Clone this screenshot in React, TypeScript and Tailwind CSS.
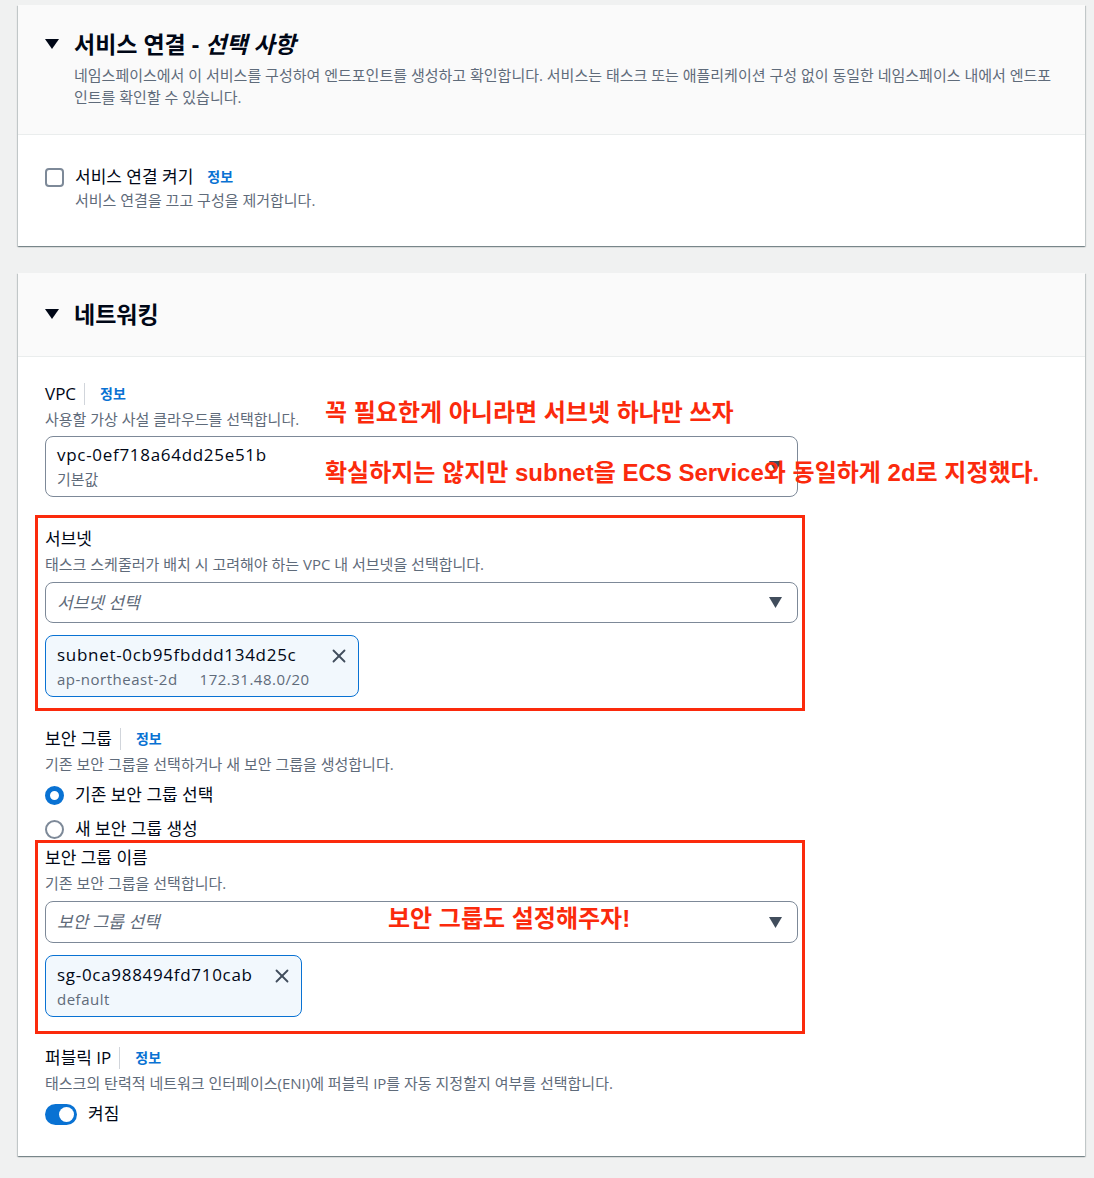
import { X } from "lucide-react";

const font = "font-['Open_Sans','Noto_Sans_CJK_KR',sans-serif]";
const note =
  "absolute z-10 whitespace-nowrap font-['Liberation_Sans','Noto_Sans_CJK_KR',sans-serif] font-bold text-[24px] leading-[30px] text-[#fb2a0c]";

function Caret({ className = "" }: { className?: string }) {
  return (
    <svg width="14" height="10" viewBox="0 0 14 10" className={className}>
      <polygon points="0,0 14,0 7,10" fill="currentColor" />
    </svg>
  );
}

function SelectCaret() {
  return (
    <svg width="13" height="11" viewBox="0 0 13 11" className="text-[#414d5c]">
      <polygon points="0,0 13,0 6.5,11" fill="currentColor" />
    </svg>
  );
}

function Info({ sep = true }: { sep?: boolean }) {
  return (
    <span
      className={`text-[14px] font-bold text-[#0972d3] ${
        sep ? "ml-[8px] border-l border-[#d1d5db] pl-[15px]" : "ml-[14px]"
      }`}
    >
      정보
    </span>
  );
}

function Label({ text, info = false }: { text: string; info?: boolean }) {
  return (
    <div className="flex h-[22px] items-center text-[17px] leading-[22px] text-[#000716]">
      <span>{text}</span>
      {info && <Info />}
    </div>
  );
}

function Desc({ text }: { text: string }) {
  return (
    <div className="mt-[3px] h-[22px] text-[15px] leading-[22px] text-[#5f6b7a]">{text}</div>
  );
}

function Placeholder({ text, tall = false, children }: { text: string; tall?: boolean; children?: React.ReactNode }) {
  return (
    <div
      className={`relative flex items-center justify-between rounded-[8px] border border-[#7d8998] bg-white pl-[11px] pr-[15px] ${
        tall ? "h-[42px]" : "h-[41px]"
      }`}
    >
      <span className="text-[17px] italic text-[#5f6b7a]">{text}</span>
      <SelectCaret />
      {children}
    </div>
  );
}

function Token({ id, sub }: { id: string; sub: React.ReactNode }) {
  return (
    <div className="inline-flex h-[62px] items-start rounded-[8px] border border-[#0972d3] bg-[#f2f8fd] pl-[11px] pr-[8px] pt-[8px]">
      <div>
        <div className="text-[17px] leading-[22px] tracking-[0.7px] text-[#000716]">{id}</div>
        <div className="mt-[3px] flex gap-[22px] text-[15px] leading-[20px] tracking-[0.5px] text-[#5f6b7a]">{sub}</div>
      </div>
      <X className="ml-[18px] mt-[1px] text-[#414d5c]" size={22} strokeWidth={2} />
    </div>
  );
}

function Radio({ checked, text }: { checked: boolean; text: string }) {
  return (
    <div className="flex h-[24px] items-center text-[17px] leading-[24px] text-[#000716]">
      <span
        className={`mr-[11px] h-[19px] w-[19px] rounded-full bg-white ${
          checked ? "border-[5px] border-[#0972d3]" : "border-2 border-[#7d8998]"
        }`}
      />
      {text}
    </div>
  );
}

const card =
  "bg-white shadow-[0_1px_1px_0_rgba(0,28,36,0.3),1px_1px_1px_0_rgba(0,28,36,0.15),-1px_1px_1px_0_rgba(0,28,36,0.15)]";

export default function App() {
  return (
    <div className={`min-h-[1178px] bg-[#f0f1f1] pb-[22px] pl-[18px] pr-[9px] pt-[5px] ${font}`}>
      {/* 서비스 연결 */}
      <div className={`h-[241px] ${card}`}>
        <div className="h-[130px] border-b border-[#eaeded] bg-[#fafafa] pl-[27px] pr-[22px] pt-[25px]">
          <div className="flex h-[28px] items-center">
            <Caret className="text-[#000716]" />
            <h2 className="ml-[15px] text-[23px] font-bold leading-[28px] text-[#000716]">
              서비스 연결 - <i>선택 사항</i>
            </h2>
          </div>
          <p className="ml-[29px] mt-[6px] text-[15px] leading-[22px] text-[#5f6b7a]">
            네임스페이스에서 이 서비스를 구성하여 엔드포인트를 생성하고 확인합니다. 서비스는 태스크 또는
            애플리케이션 구성 없이 동일한 네임스페이스 내에서 엔드포인트를 확인할 수 있습니다.
          </p>
        </div>
        <div className="flex pl-[27px] pt-[30px]">
          <span className="mt-[3px] h-[19px] w-[19px] rounded-[4px] border-2 border-[#7d8998] bg-white" />
          <div className="ml-[11px]">
            <div className="flex h-[24px] items-center text-[17px] leading-[24px] text-[#000716]">
              서비스 연결 켜기
              <Info sep={false} />
            </div>
            <div className="text-[15px] leading-[22px] text-[#5f6b7a]">
              서비스 연결을 끄고 구성을 제거합니다.
            </div>
          </div>
        </div>
      </div>

      {/* 네트워킹 */}
      <div className={`mt-[27px] h-[883px] ${card}`}>
        <div className="flex h-[84px] items-center border-b border-[#eaeded] bg-[#fafafa] pb-[1px] pl-[27px]">
          <Caret className="text-[#000716]" />
          <h2 className="ml-[15px] text-[23px] font-bold leading-[30px] text-[#000716]">네트워킹</h2>
        </div>

        <div className="pl-[27px] pt-[26px]">
          <div className="w-[753px]">
            {/* VPC */}
            <div className="relative">
              <Label text="VPC" info />
              <Desc text="사용할 가상 사설 클라우드를 선택합니다." />
              <div className="mt-[6px] flex h-[61px] items-center justify-between rounded-[8px] border border-[#7d8998] bg-white pl-[11px] pr-[15px]">
                <div>
                  <div className="text-[17px] leading-[22px] tracking-[0.7px] text-[#000716]">vpc-0ef718a64dd25e51b</div>
                  <div className="mt-[3px] text-[15px] leading-[20px] text-[#5f6b7a]">기본값</div>
                </div>
                <SelectCaret />
              </div>
              <div className={`${note} left-[280px] top-[15px]`}>꼭 필요한게 아니라면 서브넷 하나만 쓰자</div>
              <div className={`${note} left-[280px] top-[75px]`}>
                확실하지는 않지만 subnet을 ECS Service와 동일하게 2d로 지정했다.
              </div>
            </div>

            {/* 서브넷 */}
            <div className="-ml-[10px] mt-[18px] w-[770px] border-[3px] border-[#fb2a0c] pb-[11px] pl-[7px] pr-[4px] pt-[10px]">
              <Label text="서브넷" />
              <Desc text="태스크 스케줄러가 배치 시 고려해야 하는 VPC 내 서브넷을 선택합니다." />
              <div className="mt-[7px]">
                <Placeholder text="서브넷 선택" />
              </div>
              <div className="mt-[12px]">
                <Token
                  id="subnet-0cb95fbddd134d25c"
                  sub={
                    <>
                      <span>ap-northeast-2d</span>
                      <span>172.31.48.0/20</span>
                    </>
                  }
                />
              </div>
            </div>

            {/* 보안 그룹 */}
            <div className="mt-[17px]">
              <Label text="보안 그룹" info />
              <Desc text="기존 보안 그룹을 선택하거나 새 보안 그룹을 생성합니다." />
              <div className="mt-[8px] flex flex-col gap-[10px]">
                <Radio checked text="기존 보안 그룹 선택" />
                <Radio checked={false} text="새 보안 그룹 생성" />
              </div>
            </div>

            <div className="-ml-[10px] -mt-[1px] w-[770px] border-[3px] border-[#fb2a0c] pb-[14px] pl-[7px] pr-[4px] pt-[4px]">
              <Label text="보안 그룹 이름" />
              <Desc text="기존 보안 그룹을 선택합니다." />
              <div className="mt-[7px]">
                <Placeholder text="보안 그룹 선택" tall>
                  <div className={`${note} left-[342px] top-[2px]`}>보안 그룹도 설정해주자!</div>
                </Placeholder>
              </div>
              <div className="mt-[12px]">
                <Token id="sg-0ca988494fd710cab" sub={<span>default</span>} />
              </div>
            </div>

            {/* 퍼블릭 IP */}
            <div className="mt-[13px]">
              <Label text="퍼블릭 IP" info />
              <Desc text="태스크의 탄력적 네트워크 인터페이스(ENI)에 퍼블릭 IP를 자동 지정할지 여부를 선택합니다." />
              <div className="mt-[8px] flex h-[24px] items-center text-[17px] leading-[24px] text-[#000716]">
                <span className="flex h-[21px] w-[32px] items-center justify-end rounded-full bg-[#0972d3] pr-[3px]">
                  <span className="h-[15px] w-[15px] rounded-full bg-white" />
                </span>
                <span className="ml-[11px]">켜짐</span>
              </div>
            </div>
          </div>
        </div>
      </div>
    </div>
  );
}
